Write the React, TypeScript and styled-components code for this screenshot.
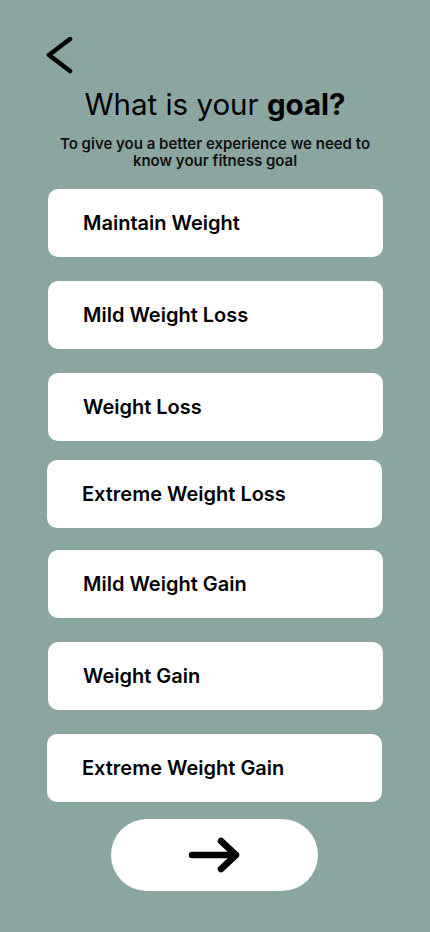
import React from "react";
import styled, { createGlobalStyle } from "styled-components";

const Global = createGlobalStyle`
  html, body { margin: 0; padding: 0; background: #8aa6a1; }
  body { font-family: Inter, "Noto Sans", sans-serif; }
`;

const Screen = styled.div`
  width: 430px;
  height: 932px;
  background: #8aa6a1;
  box-sizing: border-box;
  padding-top: 38px;
  display: flex;
  flex-direction: column;
`;

const BackButton = styled.button`
  align-self: flex-start;
  margin-left: 45px;
  width: 30px;
  height: 36px;
  padding: 0;
  border: none;
  background: transparent;
  display: flex;
  align-items: center;
  justify-content: center;
`;

const Title = styled.h1`
  margin: 13px 0 0;
  text-align: center;
  font-size: 29.5px;
  font-weight: 400;
  line-height: 34px;
  color: #000;
  b { font-weight: 700; }
`;

const Subtitle = styled.p`
  margin: 14px auto 0;
  width: 330px;
  text-align: center;
  font-size: 15px;
  font-weight: 600;
  line-height: 17px;
  color: #111;
`;

const List = styled.div`
  margin-top: 20px;
  display: flex;
  flex-direction: column;
`;

const Option = styled.button<{ $top: number; $shift: number }>`
  margin-top: ${(p) => p.$top}px;
  margin-left: ${(p) => 48 + p.$shift}px;
  width: 335px;
  height: 68px;
  border: none;
  border-radius: 10px;
  background: #fff;
  display: flex;
  align-items: center;
  padding: 0 0 0 35px;
  font-family: Inter, "Noto Sans", sans-serif;
  font-size: 20px;
  font-weight: 600;
  color: #000;
  text-align: left;
`;

const NextButton = styled.button`
  margin: 17px 0 0 111px;
  width: 207px;
  height: 72px;
  border: none;
  border-radius: 36px;
  background: #fff;
  display: flex;
  align-items: center;
  justify-content: center;
`;

const options: [string, number, number][] = [
  ["Maintain Weight", 0, 0],
  ["Mild Weight Loss", 24, 0],
  ["Weight Loss", 24, 0],
  ["Extreme Weight Loss", 19, -1],
  ["Mild Weight Gain", 22, 0],
  ["Weight Gain", 24, 0],
  ["Extreme Weight Gain", 24, -1],
];

export default function App() {
  return (
    <>
      <Global />
      <Screen>
        <BackButton aria-label="Back">
          <svg width="30" height="38" viewBox="0 0 30 38" fill="none">
            <path d="M25 2 L4 18 L25 34" stroke="#000" strokeWidth="4.6" strokeLinecap="round" strokeLinejoin="round" />
          </svg>
        </BackButton>
        <Title>
          What is your <b>goal?</b>
        </Title>
        <Subtitle>To give you a better experience we need to know your fitness goal</Subtitle>
        <List>
          {options.map(([label, top, shift]) => (
            <Option key={label} $top={top} $shift={shift}>
              {label}
            </Option>
          ))}
        </List>
        <NextButton aria-label="Next">
          <svg width="58" height="40" viewBox="0 0 58 40" fill="none">
            <path d="M6 20 H50 M35 6 L50 20 L35 34" stroke="#000" strokeWidth="6.5" strokeLinecap="round" strokeLinejoin="round" />
          </svg>
        </NextButton>
      </Screen>
    </>
  );
}
